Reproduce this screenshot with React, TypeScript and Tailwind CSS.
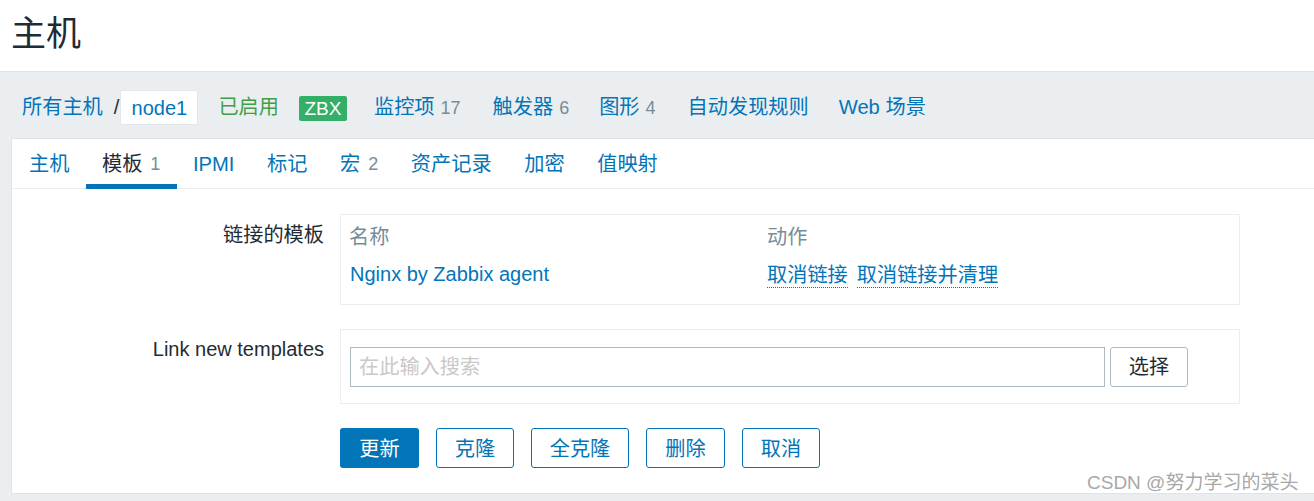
const navCount = "text-[#768d99] text-[18px] ml-[6px]";
const tabCount = "text-[#768d99] text-[18px] ml-[8px]";

function Tab({ label, count, active }: { label: string; count?: string; active?: boolean }) {
  return (
    <a
      href="#"
      className={
        active
          ? "flex h-[50px] items-center px-[16.3px] pt-[6px] text-[#1f2c33] border-b-[5px] border-[#0275b8]"
          : "flex h-[50px] items-center px-[16.3px] pt-[1px] text-[#0275b8]"
      }
    >
      {label}
      {count && <span className={tabCount}>{count}</span>}
    </a>
  );
}

function OutlineButton({ label, width }: { label: string; width: string }) {
  return (
    <button className={`h-[40px] ${width} rounded-[3px] border border-[#0275b8] bg-white pt-[2px] text-[#0275b8]`}>
      {label}
    </button>
  );
}

export default function App() {
  return (
    <div className="relative h-[501px] w-[1314px] overflow-hidden bg-white text-[20.2px] text-[#1f2c33] font-['Liberation_Sans','Noto_Sans_CJK_SC',sans-serif]">
      <header className="flex h-[72px] items-center border-b border-[#dfe4e7] pb-[5px] pl-[11px]">
        <h1 className="text-[35px] font-normal leading-none">主机</h1>
      </header>

      <div className="h-[429px] bg-[#ebeef0] pl-[11px]">
        <nav className="flex h-[66px] items-center pl-[11px] pt-[5px] text-[#0275b8]">
          <a href="#">所有主机</a>
          <span className="ml-[11px] mr-[1px] text-[#1f2c33]">/</span>
          <a href="#" className="flex h-[35px] w-[78px] items-center justify-center rounded-[2px] border border-[#e3e7ea] bg-white text-[20px]">
            node1
          </a>
          <a href="#" className="ml-[20px] text-[#429e47]">已启用</a>
          <span className="ml-[20px] mt-[2px] flex h-[25px] w-[48px] items-center justify-center rounded-[2px] bg-[#34af67] pt-[2px] text-[19px] text-white">
            ZBX
          </span>
          <a href="#" className="ml-[27px]">监控项<span className={navCount}>17</span></a>
          <a href="#" className="ml-[32px]">触发器<span className={navCount}>6</span></a>
          <a href="#" className="ml-[30px]">图形<span className={navCount}>4</span></a>
          <a href="#" className="ml-[32px]">自动发现规则</a>
          <a href="#" className="ml-[30px]">Web 场景</a>
        </nav>

        <main className="h-[356px] border border-r-0 border-[#dfe4e7] bg-white">
          <div className="flex h-[50px] items-center border-b border-[#ebeef0] pl-[0.7px]">
            <Tab label="主机" />
            <Tab label="模板" count="1" active />
            <Tab label="IPMI" />
            <Tab label="标记" />
            <Tab label="宏" count="2" />
            <Tab label="资产记录" />
            <Tab label="加密" />
            <Tab label="值映射" />
          </div>

          <div className="grid grid-cols-[312px_900px] gap-x-[16px] pt-[25px]">
            <div className="pt-[6px] text-right">链接的模板</div>
            <div className="h-[91px] border border-[#ebeef0] pl-[8px]">
              <div className="flex h-[44px] items-center text-[#768d99]">
                <div className="w-[418px]">名称</div>
                <div>动作</div>
              </div>
              <div className="flex items-center pt-[4px] leading-[23px]">
                <a href="#" className="w-[418px] pb-[2px] pl-[1px] text-[20px] text-[#0275b8]">Nginx by Zabbix agent</a>
                <a href="#" className="border-b border-dotted border-[#0275b8] text-[#0275b8]">取消链接</a>
                <a href="#" className="ml-[9px] border-b border-dotted border-[#0275b8] text-[#0275b8]">取消链接并清理</a>
              </div>
            </div>

            <div className="mt-[24px] pt-[5px] text-right text-[20px]">Link new templates</div>
            <div className="mt-[24px] flex h-[75px] items-center gap-[5px] border border-[#ebeef0] pl-[9px]">
              <input
                placeholder="在此输入搜索"
                className="h-[40px] w-[755px] border border-[#acbbc2] px-[8px] pt-[2px] outline-none placeholder:text-[#c9c9c9]"
              />
              <button className="h-[40px] w-[78px] rounded-[3px] border border-[#acbbc2] bg-white pt-[2px]">选择</button>
            </div>

            <div className="col-start-2 mt-[24px] flex gap-[17px]">
              <button className="h-[40px] w-[79px] rounded-[3px] bg-[#0275b8] pt-[2px] text-white">更新</button>
              <OutlineButton label="克隆" width="w-[78px]" />
              <OutlineButton label="全克隆" width="w-[98px]" />
              <OutlineButton label="删除" width="w-[79px]" />
              <OutlineButton label="取消" width="w-[78px]" />
            </div>
          </div>
        </main>
      </div>

      <span className="absolute left-[1087px] top-[472px] text-[19px] leading-[22px] text-[#a8a8a8]">
        CSDN @努力学习的菜头
      </span>
    </div>
  );
}
